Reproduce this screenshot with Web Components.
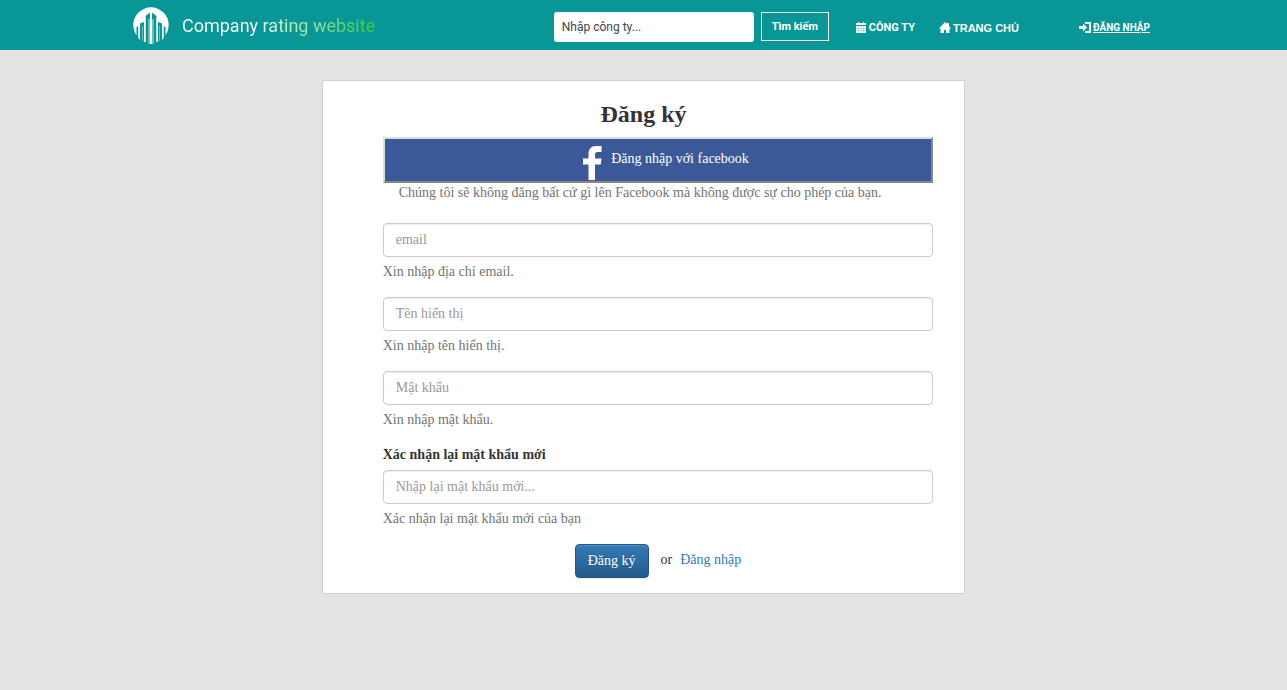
<!DOCTYPE html>
<html lang="vi">
<head>
<meta charset="utf-8">
<meta name="viewport" content="width=device-width, initial-scale=1">
<title>Đăng ký</title>
<style>
body { margin: 0; background: #e4e4e4; color: #333; font: 14px/20px "Liberation Serif", "Times New Roman", serif; }
</style>
</head>
<body>
<site-header></site-header>
<sign-up-card></sign-up-card>

<script>
const define = (name, html) => {
  const template = document.createElement('template');
  template.innerHTML = html;
  customElements.define(name, class extends HTMLElement {
    constructor() {
      super();
      this.attachShadow({ mode: 'open' }).append(template.content.cloneNode(true));
    }
  });
};

define('nav-link', `
<style>
  :host { display: block; }
  a { display: flex; align-items: center; gap: 2px; color: #fff; text-decoration: none; font: bold 11px/20px Roboto, sans-serif; white-space: nowrap; }
  :host([wide]) a { font-family: "Liberation Sans", Arial, sans-serif; }
  :host([underlined]) a { font-size: 10px; text-decoration: underline; }
  ::slotted(svg) { display: block; width: 12px; height: 12px; fill: currentColor; }
</style>
<a href="#"><slot name="icon"></slot><span><slot></slot></span></a>`);

define('site-brand', `
<style>
  :host { display: block; }
  a { display: flex; align-items: center; gap: 13px; text-decoration: none; font: 400 18px/24px Roboto, sans-serif; white-space: nowrap; }
  svg { display: block; width: 36px; height: 38px; }
  span { background: linear-gradient(90deg, #fff 35%, #3ecb4b 96%); -webkit-background-clip: text; background-clip: text; color: transparent; }
</style>
<a href="#">
  <svg viewBox="0 0 36 38" aria-hidden="true">
    <circle cx="18" cy="18" r="17.700" fill="#fff"/>
    <path fill="#089696" d="M12.500 38V9L17 5.500V38ZM23.500 38V9L19 5.500V38Z"/>
    <path fill="#089696" d="M11 38V15L7 16.500V38ZM25 38V15L29 16.500V38Z"/>
    <path fill="#089696" d="M5.500 38V19L3.500 20V38ZM30.500 38V19L32.500 20V38Z"/>
    <path fill="#fff" d="M17 5H19V37H17ZM11 10H12.500V35H11ZM23.500 10H25V35H23.500ZM5.500 19H7V33L5.500 31ZM29 19H30.500V31L29 33Z"/>
    <path fill="#fff" opacity=".4" d="M15 12H17V37H15ZM19 12H21V37H19ZM9 19H10V34H9ZM26 19H27V34H26Z"/>
  </svg>
  <span>Company rating website</span>
</a>`);

define('search-form', `
<style>
  :host { display: block; }
  form { display: flex; align-items: flex-start; gap: 7px; margin: 0; }
  input { box-sizing: border-box; width: 200px; height: 30px; margin: 0; padding: 0 8px; border: 0; border-radius: 3px; background: #fff; color: #444; font: 12px/20px Roboto, sans-serif; }
  input::placeholder { color: #444; opacity: 1; }
  button { box-sizing: border-box; width: 68px; height: 29px; padding: 0; border: 1px solid #fff; background: transparent; color: #fff; font: bold 11px/20px Roboto, sans-serif; }
</style>
<form>
  <input type="text" placeholder="Nhập công ty..." aria-label="Nhập công ty">
  <button type="button">Tìm kiếm</button>
</form>`);

define('site-header', `
<style>
  :host { display: block; background: #089696; }
  header { display: flex; align-items: center; max-width: 1021px; height: 50px; margin: 0 auto; }
  site-brand { margin-top: 1px; }
  search-form { margin-left: auto; margin-top: 4px; }
  nav { display: flex; margin: 6px 4px 0 26px; gap: 24px; }
  nav-link:last-child { margin-left: 36px; }
</style>
<header>
  <site-brand></site-brand>
  <search-form></search-form>
  <nav>
    <nav-link><svg slot="icon" viewBox="0 0 12 12"><path d="M1 1H3V0H4V1H8V0H9V1H11V3H1ZM1 4H11V11H1Z"/><path d="M1 6.500H11M1 8.500H11M3.500 4V11M6 4V11M8.500 4V11" stroke="#089696" stroke-width=".25"/></svg>CÔNG TY</nav-link>
    <nav-link wide><svg slot="icon" viewBox="0 0 12 12"><path d="M6 0L8 2V1H10V4L12 6.500H10.500V11H7V8H5V11H1.500V6.500H0Z"/></svg>TRANG CHỦ</nav-link>
    <nav-link underlined><svg slot="icon" viewBox="0 0 12 12"><path d="M0 4H4V1.500L8 5.500L4 9.500V7H0ZM6 0H12V11H6V9H10V2H6Z"/></svg>ĐĂNG NHẬP</nav-link>
  </nav>
</header>`);

define('facebook-button', `
<style>
  :host { display: block; }
  button { box-sizing: border-box; display: flex; justify-content: center; align-items: flex-start; gap: 9px; width: 100%; height: 46px; padding: 7px 0 0 16px; border: 2px solid; border-color: #ddd #888 #888 #ddd; background: #3b5998; color: #fff; font: inherit; }
  svg { display: block; width: 19px; height: 34px; }
  span { line-height: 26px; }
</style>
<button type="button">
  <svg viewBox="0 0 19 34" aria-hidden="true"><path fill="#fff" d="M18.500 0V6H15C12.500 6 12 7 12 9V12.500H18.500L17.800 18.500H12V34H5.500V18.500H0V12.500H5.500V8C5.500 3 8 0 13 0Z"/></svg>
  <span><slot></slot></span>
</button>`);

customElements.define('form-field', class extends HTMLElement {
  constructor() {
    super();
    this.attachShadow({ mode: 'open' }).innerHTML = `
<style>
  :host { display: block; margin-bottom: 15px; }
  label { display: block; margin-bottom: 5px; font-weight: bold; }
  input { box-sizing: border-box; display: block; width: 100%; height: 34px; margin: 0; padding: 6px 12px; border: 1px solid #ccc; border-radius: 4px; background: #fff; box-shadow: inset 0 1px 1px rgba(0,0,0,.075); color: #555; font: inherit; }
  input::placeholder { color: #999; opacity: 1; }
  p { margin: 5px 0 0; color: #737373; }
</style>
<label for="field" hidden></label>
<input id="field" aria-describedby="help">
<p id="help"><slot></slot></p>`;
  }
  connectedCallback() {
    const label = this.shadowRoot.querySelector('label');
    const input = this.shadowRoot.querySelector('input');
    input.type = this.getAttribute('type') || 'text';
    input.placeholder = this.getAttribute('placeholder');
    if (this.hasAttribute('label')) {
      label.textContent = this.getAttribute('label');
      label.hidden = false;
    } else {
      label.remove();
      input.setAttribute('aria-label', input.placeholder);
    }
  }
});

define('sign-up-card', `
<style>
  :host { box-sizing: border-box; display: block; width: 50%; min-width: 480px; margin: 30px auto; border: 1px solid #d0d0d0; background: #fff; }
  h1 { margin: 0; padding: 19px 0 9px; text-align: center; font-size: 24px; line-height: 28px; }
  form { margin: 0; padding: 0 31px 15px 60px; }
  .note { margin: 0 0 20px 16px; color: #737373; }
  .actions { display: flex; justify-content: center; }
  .actions button { height: 34px; margin-right: 12px; padding: 0 12px; border: 1px solid #245580; border-radius: 4px; background: linear-gradient(#337ab7, #265a88); box-shadow: inset 0 1px 0 rgba(255,255,255,.15), 0 1px 1px rgba(0,0,0,.075); color: #fff; font: inherit; text-shadow: 0 -1px 0 rgba(0,0,0,.2); }
  .actions span, .actions a { line-height: 32px; }
  .actions a { margin-left: 8px; color: #337ab7; text-decoration: none; }
</style>
<h1>Đăng ký</h1>
<form>
  <facebook-button>Đăng nhập với facebook</facebook-button>
  <p class="note">Chúng tôi sẽ không đăng bất cứ gì lên Facebook mà không được sự cho phép của bạn.</p>
  <form-field type="email" placeholder="email">Xin nhập địa chỉ email.</form-field>
  <form-field placeholder="Tên hiển thị">Xin nhập tên hiển thị.</form-field>
  <form-field type="password" placeholder="Mật khẩu">Xin nhập mật khẩu.</form-field>
  <form-field type="password" label="Xác nhận lại mật khẩu mới" placeholder="Nhập lại mật khẩu mới...">Xác nhận lại mật khẩu mới của bạn</form-field>
  <div class="actions"><button type="button">Đăng ký</button><span>or</span><a href="#">Đăng nhập</a></div>
</form>`);
</script>
</body>
</html>
